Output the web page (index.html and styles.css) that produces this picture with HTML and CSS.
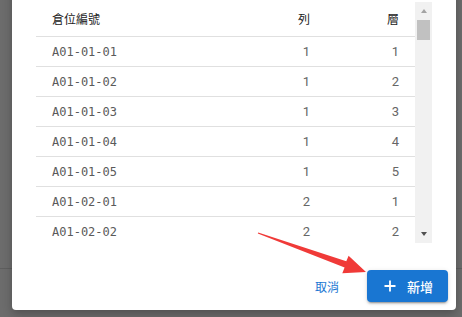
FILE: index.html
```html
<!DOCTYPE html>
<html>
<head>
<meta charset="utf-8">
<link rel="stylesheet" href="styles.css">
</head>
<body>
<div class="page"><div class="page-block"></div></div>
<div class="dialog">
  <div class="content">
    <div class="scroll">
      <div class="table">
        <div class="row head"><div class="cell">倉位編號</div><div class="cell num">列</div><div class="cell num">層</div></div>
        <div class="row"><div class="cell code">A01-01-01</div><div class="cell num">1</div><div class="cell num">1</div></div>
        <div class="row"><div class="cell code">A01-01-02</div><div class="cell num">1</div><div class="cell num">2</div></div>
        <div class="row"><div class="cell code">A01-01-03</div><div class="cell num">1</div><div class="cell num">3</div></div>
        <div class="row"><div class="cell code">A01-01-04</div><div class="cell num">1</div><div class="cell num">4</div></div>
        <div class="row"><div class="cell code">A01-01-05</div><div class="cell num">1</div><div class="cell num">5</div></div>
        <div class="row"><div class="cell code">A01-02-01</div><div class="cell num">2</div><div class="cell num">1</div></div>
        <div class="row"><div class="cell code">A01-02-02</div><div class="cell num">2</div><div class="cell num">2</div></div>
      </div>
      <div class="scrollbar">
        <div class="sb-btn"><span class="tri-up"></span></div>
        <div class="sb-track"><div class="sb-thumb"></div></div>
        <div class="sb-btn"><span class="tri-down"></span></div>
      </div>
    </div>
  </div>
  <div class="actions">
    <button class="btn-text">取消</button>
    <button class="btn-primary">
      <svg class="plus" width="12" height="12" viewBox="0 0 12 12"><path d="M6 0.5V11.5M0.5 6H11.5" stroke="#fff" stroke-width="1.8" fill="none"/></svg>
      <span>新增</span>
    </button>
  </div>
</div>
<svg class="annot" width="462" height="317" viewBox="0 0 462 317">
  <polygon points="258.2,232.5 346.3,261.2 348.6,255.8 366,272 342.3,273.2 344.6,267.6 257.8,233.5" fill="#f03a38"/>
</svg>
</body>
</html>
```

FILE: styles.css
```css
html, body {
  margin: 0;
  padding: 0;
  width: 462px;
  height: 317px;
  overflow: hidden;
  background: #6c6c6c;
}

.page-block {
  height: 268px;
  border-bottom: 1px solid #5e5e5e;
}

.dialog {
  position: absolute;
  left: 12px;
  top: -22px;
  width: 444px;
  background: #fff;
  border-radius: 4px;
  box-shadow: 0 4px 10px rgba(0, 0, 0, 0.25);
  font-family: "Noto Sans CJK TC", "Noto Sans", sans-serif;
}

.content {
  padding: 24px 24px 19px;
}

.scroll {
  display: flex;
  height: 241px;
  overflow: hidden;
}

.table {
  flex: 1;
  overflow: hidden;
}

.row {
  display: grid;
  grid-template-columns: 1fr 100px 89px;
  height: 30px;
  box-sizing: border-box;
  border-bottom: 1px solid #e0e0e0;
  align-items: center;
}

.row.head {
  height: 35px;
}

.row:last-child {
  border-bottom: 0;
}

.cell {
  padding: 0 16px;
  font-size: 13px;
  color: #666;
  font-family: Roboto, "Noto Sans CJK TC", sans-serif;
  line-height: 16px;
}

.head .cell {
  font-family: "Noto Sans CJK TC", sans-serif;
  font-size: 12px;
  color: #222;
}

.cell.code {
  font-family: "DejaVu Sans Mono", monospace;
  font-size: 12px;
  color: #5a5a5a;
}

.cell.num {
  text-align: right;
}

.scrollbar {
  width: 17px;
  background: #f1f1f1;
  display: flex;
  flex-direction: column;
}

.sb-btn {
  height: 18px;
  display: flex;
  align-items: center;
  justify-content: center;
}

.tri-up {
  width: 0;
  height: 0;
  border-left: 3.5px solid transparent;
  border-right: 3.5px solid transparent;
  border-bottom: 4px solid #a3a3a3;
}

.tri-down {
  width: 0;
  height: 0;
  border-left: 3.5px solid transparent;
  border-right: 3.5px solid transparent;
  border-top: 4px solid #505050;
}

.sb-track {
  flex: 1;
  padding: 0 2px;
}

.sb-thumb {
  height: 20px;
  background: #c1c1c1;
}

.actions {
  display: flex;
  justify-content: flex-end;
  gap: 8px;
  padding: 8px;
}

.btn-text {
  min-width: 64px;
  height: 32px;
  border: 0;
  background: transparent;
  color: #1976d2;
  font-family: "Noto Sans CJK TC", sans-serif;
  font-size: 12px;
  padding: 0 8px;
}

.btn-primary {
  width: 81px;
  height: 32px;
  border: 0;
  border-radius: 4px;
  background: #1976d2;
  color: #fff;
  display: flex;
  align-items: center;
  gap: 11px;
  padding: 0 0 0 17px;
  font-family: "Noto Sans CJK TC", sans-serif;
  font-size: 13px;
  font-weight: 500;
  box-shadow: 0 3px 1px -2px rgba(0,0,0,.2), 0 2px 2px 0 rgba(0,0,0,.14), 0 1px 5px 0 rgba(0,0,0,.12);
}

.annot {
  position: absolute;
  left: 0;
  top: 0;
  pointer-events: none;
}
```
